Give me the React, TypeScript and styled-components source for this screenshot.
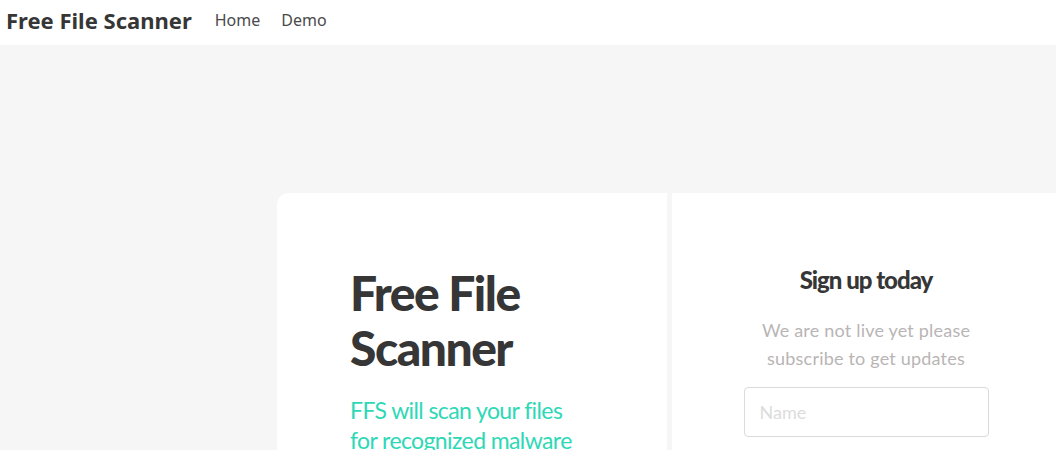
import styled, { createGlobalStyle } from "styled-components";

const GlobalStyle = createGlobalStyle`
  html, body {
    margin: 0;
    padding: 0;
    background: #f6f6f6;
    overflow: hidden;
  }
  * {
    box-sizing: border-box;
  }
`;

const Page = styled.div`
  width: 1056px;
  height: 450px;
  overflow: hidden;
  background: #f6f6f6;
  font-family: Lato, "Noto Sans", sans-serif;
`;

const Navbar = styled.nav`
  height: 45px;
  background: #fff;
  display: flex;
  align-items: center;
  padding: 0 0 6px 6px;
`;

const Brand = styled.a`
  font-family: "Noto Sans", sans-serif;
  font-size: 22px;
  font-weight: 700;
  color: #363636;
  margin-right: 23px;
  text-decoration: none;
`;

const NavLink = styled.a`
  font-family: "Noto Sans", sans-serif;
  font-size: 16px;
  color: #4a4a4a;
  margin-right: 21px;
  text-decoration: none;
`;

const Hero = styled.section`
  padding: 148px 0 0 277px;
`;

const Cards = styled.div`
  display: grid;
  grid-template-columns: 390px 388px;
  gap: 5px;
`;

const Card = styled.div<{ $rounded?: boolean }>`
  background: #fff;
  height: 300px;
  border-radius: ${(p) => (p.$rounded ? "12px 0 0 0" : "0")};
`;

const IntroCard = styled(Card)`
  padding: 72px 40px 0 73px;
`;

const SignupCard = styled(Card)`
  padding: 72px 20px 0 20px;
  display: flex;
  flex-direction: column;
  align-items: center;
  text-align: center;
`;

const Title = styled.h1`
  margin: 0;
  font-family: Lato, sans-serif;
  font-size: 48px;
  font-weight: 900;
  line-height: 55px;
  letter-spacing: -1.5px;
  color: #363636;
`;

const Subtitle = styled.p`
  margin: 20px 0 0;
  font-size: 23px;
  line-height: 30px;
  letter-spacing: -0.6px;
  color: #2ed8b6;
  width: 232px;
`;

const SignupTitle = styled.h2`
  margin: 0;
  font-family: Lato, sans-serif;
  font-size: 24px;
  font-weight: 900;
  letter-spacing: -1px;
  color: #363636;
`;

const SignupText = styled.p`
  margin: 22px 0 0;
  font-size: 18px;
  line-height: 28px;
  letter-spacing: 0.2px;
  color: #b8b5b5;
  width: 230px;
`;

const Input = styled.input`
  margin-top: 15px;
  width: 245px;
  height: 50px;
  border: 1px solid #dbdbdb;
  border-radius: 4px;
  padding: 0 15px;
  font-family: Lato, sans-serif;
  font-size: 18px;
  color: #363636;
  outline: none;
  &::placeholder {
    color: #dcdcdc;
  }
`;

export default function App() {
  return (
    <Page>
      <GlobalStyle />
      <Navbar>
        <Brand href="#">Free File Scanner</Brand>
        <NavLink href="#">Home</NavLink>
        <NavLink href="#">Demo</NavLink>
      </Navbar>
      <Hero>
        <Cards>
          <IntroCard $rounded>
            <Title>
              Free File
              <br />
              Scanner
            </Title>
            <Subtitle>FFS will scan your files for recognized malware</Subtitle>
          </IntroCard>
          <SignupCard>
            <SignupTitle>Sign up today</SignupTitle>
            <SignupText>We are not live yet please subscribe to get updates</SignupText>
            <Input placeholder="Name" />
          </SignupCard>
        </Cards>
      </Hero>
    </Page>
  );
}
